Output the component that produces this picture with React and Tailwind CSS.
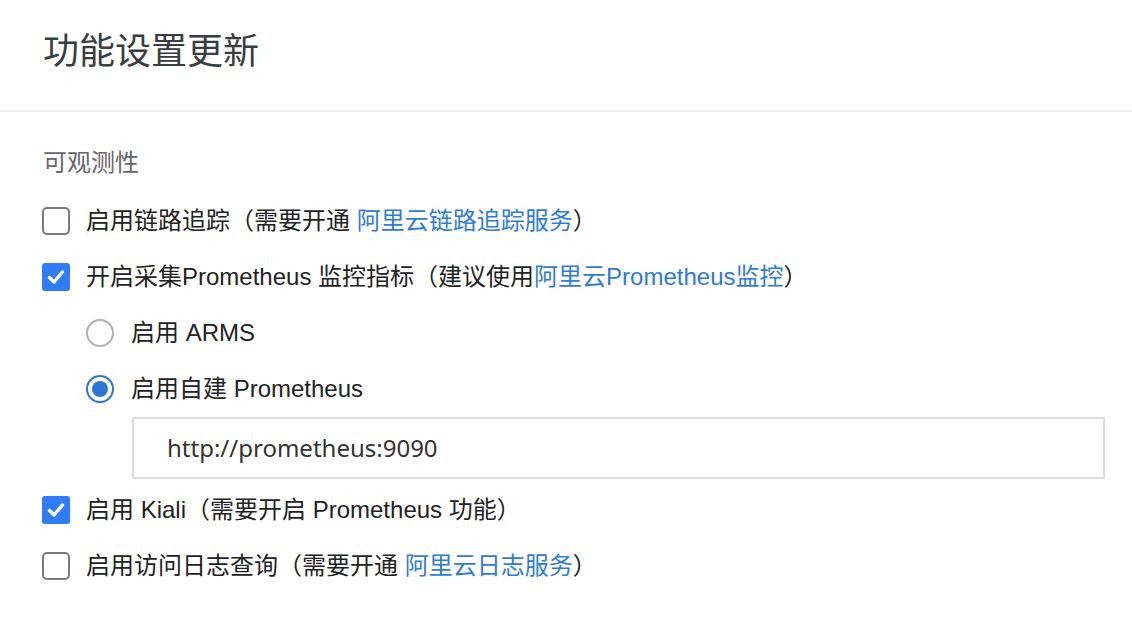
const font = { fontFamily: '"Liberation Sans", "Noto Sans CJK SC", sans-serif' };

function CheckBox({ checked }) {
  if (checked) {
    return (
      <span className="flex h-[28px] w-[28px] shrink-0 items-center justify-center rounded-[3px] bg-[#2f7cf6]">
        <svg width="20" height="20" viewBox="0 0 20 20">
          <path d="M3.5 10.5 L8 15 L16.5 5" fill="none" stroke="#fff" strokeWidth="3.4" strokeLinecap="round" strokeLinejoin="round" />
        </svg>
      </span>
    );
  }
  return <span className="h-[28px] w-[28px] shrink-0 rounded-[5px] border-2 border-[#7a7a7a] bg-white" />;
}

function Radio({ checked }) {
  if (checked) {
    return (
      <span className="flex h-[28px] w-[28px] shrink-0 items-center justify-center rounded-full border-2 border-[#2f76d2] bg-white">
        <span className="h-[16px] w-[16px] rounded-full bg-[#2f76d2]" />
      </span>
    );
  }
  return <span className="h-[28px] w-[28px] shrink-0 rounded-full border-2 border-[#b0b0b0] bg-white" />;
}

function Link({ children }) {
  return <span className="text-[#2f7bd6]">{children}</span>;
}

export default function App() {
  return (
    <div className="min-h-[622px] w-[1132px] bg-white text-[#222]" style={font}>
      <div className="h-[112px] border-b-2 border-[#efefef] pl-[43px] pt-[31px]">
        <h1 className="text-[36px] leading-[42px] text-[#373d41]">功能设置更新</h1>
      </div>

      <div className="pl-[42px] pr-[27px]">
        <div className="mt-[35px] mb-[14px] pl-[1px] text-[24px] leading-[32px] text-[#666]">可观测性</div>

        <label className="flex h-[56px] items-center gap-[16px] text-[24px]">
          <CheckBox checked={false} />
          <span>启用链路追踪（需要开通 <Link>阿里云链路追踪服务</Link>）</span>
        </label>

        <label className="flex h-[56px] items-center gap-[16px] text-[24px]">
          <CheckBox checked />
          <span>开启采集Prometheus 监控指标（建议使用<Link>阿里云Prometheus监控</Link>）</span>
        </label>

        <div className="pl-[44px]">
          <label className="flex h-[56px] items-center gap-[17px] text-[24px]">
            <Radio checked={false} />
            <span>启用 ARMS</span>
          </label>
          <label className="flex h-[56px] items-center gap-[17px] text-[24px]">
            <Radio checked />
            <span>启用自建 Prometheus</span>
          </label>
          <div className="pl-[46px]">
            <div
              className="flex h-[62px] items-center border-2 border-[#dcdcdc] pl-[33px] text-[24px] text-[#333]"
              style={{ fontFamily: '"Noto Sans", "Liberation Sans", sans-serif' }}
            >
              http://prometheus:9090
            </div>
          </div>
        </div>

        <label className="mt-[3px] flex h-[56px] items-center gap-[16px] text-[24px]">
          <CheckBox checked />
          <span>启用 Kiali（需要开启 Prometheus 功能）</span>
        </label>

        <label className="flex h-[56px] items-center gap-[16px] text-[24px]">
          <CheckBox checked={false} />
          <span>启用访问日志查询（需要开通 <Link>阿里云日志服务</Link>）</span>
        </label>
      </div>
    </div>
  );
}
